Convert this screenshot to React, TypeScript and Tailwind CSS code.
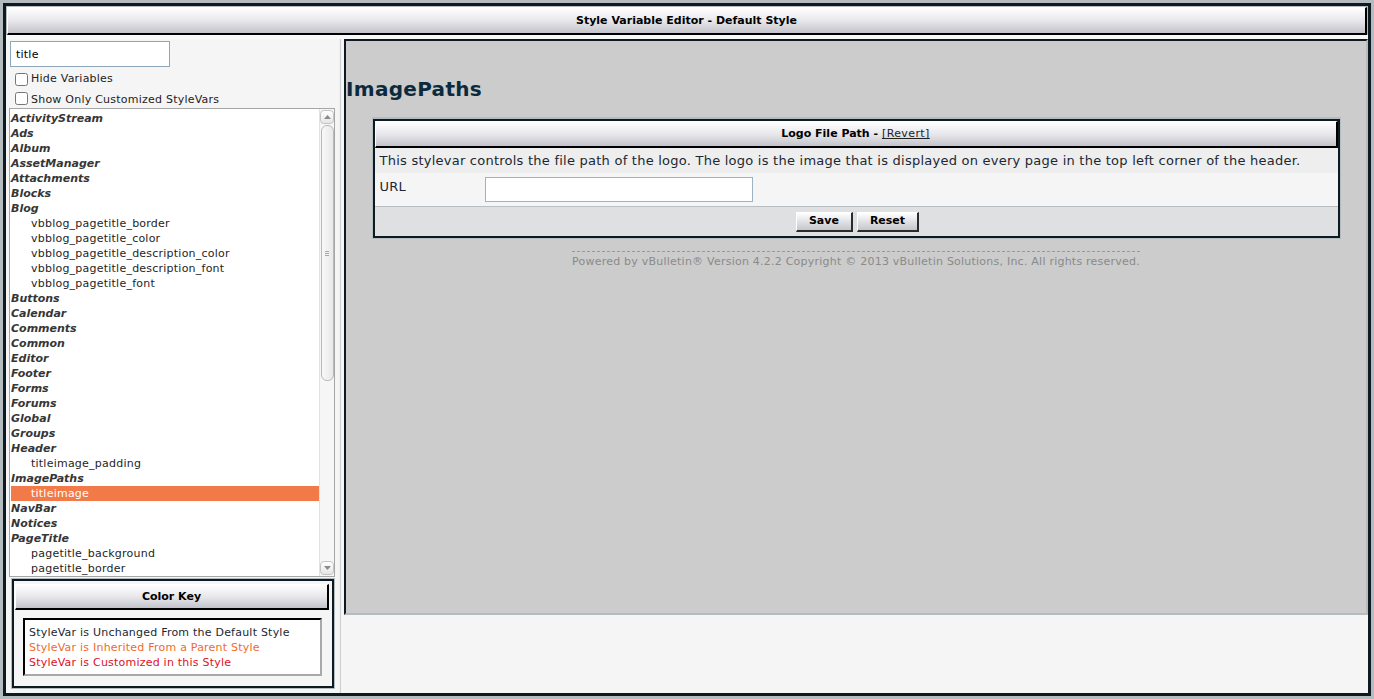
import React from 'react'

type Item = { name: string; group?: boolean; selected?: boolean }

const items: Item[] = [
  { name: 'ActivityStream', group: true },
  { name: 'Ads', group: true },
  { name: 'Album', group: true },
  { name: 'AssetManager', group: true },
  { name: 'Attachments', group: true },
  { name: 'Blocks', group: true },
  { name: 'Blog', group: true },
  { name: 'vbblog_pagetitle_border' },
  { name: 'vbblog_pagetitle_color' },
  { name: 'vbblog_pagetitle_description_color' },
  { name: 'vbblog_pagetitle_description_font' },
  { name: 'vbblog_pagetitle_font' },
  { name: 'Buttons', group: true },
  { name: 'Calendar', group: true },
  { name: 'Comments', group: true },
  { name: 'Common', group: true },
  { name: 'Editor', group: true },
  { name: 'Footer', group: true },
  { name: 'Forms', group: true },
  { name: 'Forums', group: true },
  { name: 'Global', group: true },
  { name: 'Groups', group: true },
  { name: 'Header', group: true },
  { name: 'titleimage_padding' },
  { name: 'ImagePaths', group: true },
  { name: 'titleimage', selected: true },
  { name: 'NavBar', group: true },
  { name: 'Notices', group: true },
  { name: 'PageTitle', group: true },
  { name: 'pagetitle_background' },
  { name: 'pagetitle_border' },
]

function Arrow({ down }: { down?: boolean }) {
  return (
    <div className="h-[14px] w-[14px] rounded-[4px] border border-[#c4c4c4] bg-linear-to-b from-white to-[#e6e6e6] flex items-center justify-center">
      <svg width="7" height="4" viewBox="0 0 7 4">
        <path d={down ? 'M0 0H7L3.5 4Z' : 'M0 4H7L3.5 0Z'} fill="#8a8a8a" />
      </svg>
    </div>
  )
}

function Scrollbar() {
  return (
    <div className="w-[15px] shrink-0 flex flex-col items-center bg-[#f6f6f6] border-l border-[#e2e2e2] py-px">
      <Arrow />
      <div className="mt-px h-[256px] w-[13px] rounded-[6px] border border-[#b9b9b9] bg-linear-to-r from-[#f8f8f8] to-[#e8e8e8] flex flex-col items-center justify-center gap-px">
        <div className="h-px w-[4px] bg-[#a8a8a8]" />
        <div className="h-px w-[4px] bg-[#a8a8a8]" />
        <div className="h-px w-[4px] bg-[#a8a8a8]" />
      </div>
      <div className="flex-1" />
      <Arrow down />
    </div>
  )
}

function BarHeader({ children }: { children: React.ReactNode }) {
  return (
    <div className="border-t border-l border-white border-r-2 border-b-2 border-r-black border-b-black bg-linear-to-b from-white via-[#e8e8ec] to-[#c3c4cb] flex items-center justify-center text-[11px] font-bold text-black">
      {children}
    </div>
  )
}

function Button({ label }: { label: string }) {
  return (
    <div className="h-[20px] px-[12px] border-t border-l border-white border-r-2 border-b-2 border-r-[#2b2b2b] border-b-[#2b2b2b] bg-linear-to-b from-white to-[#c5c6cc] flex items-center justify-center text-[11px] font-bold text-black">
      {label}
    </div>
  )
}

export default function App() {
  return (
    <div className="h-[699px] w-[1374px] overflow-hidden bg-[#b5bcc0] p-[3px] font-['DejaVu_Sans',Verdana,sans-serif]">
      <div className="h-full border-[3px] border-[#0d1a22] bg-[#f5f5f5] flex flex-col">
        <div className="bg-[#b5bcc0] pt-px px-px">
          <div className="h-[28px]">
            <BarHeader>
              <div className="h-[25px] pt-px flex items-center">Style Variable Editor - Default Style</div>
            </BarHeader>
          </div>
        </div>
        <div className="h-[4px] bg-[#f8f8f8]" />
        <div className="flex flex-1 min-h-0">
          {/* left column */}
          <div className="w-[333px] shrink-0 flex flex-col pt-[2px]">
            <input
              readOnly
              value="title"
              className="ml-[4px] h-[26px] w-[160px] border border-[#8ea7ba] bg-white px-[5px] text-[11px] tracking-[0.23px] text-black outline-none"
            />
            <label className="mt-[2px] ml-[9px] h-[20px] flex items-center gap-[3px] text-[11px] tracking-[0.23px] text-[#222]">
              <input type="checkbox" className="m-0 h-[13px] w-[13px]" />
              Hide Variables
            </label>
            <label className="ml-[9px] h-[19px] flex items-start pt-[3px] gap-[3px] text-[11px] tracking-[0.23px] text-[#222]">
              <input type="checkbox" className="m-0 h-[13px] w-[13px]" />
              Show Only Customized StyleVars
            </label>
            <div className="ml-[3px] h-[469px] w-[326px] border border-[#a6a6a6] bg-white flex overflow-hidden">
              <div className="flex-1 pt-[2px] pl-px overflow-hidden">
                {items.map((it) => (
                  <div
                    key={it.name}
                    className={
                      it.selected
                        ? 'h-[15px] leading-[15px] pl-[20px] text-[11px] tracking-[0.23px] bg-[#f27a48] text-white'
                        : it.group
                          ? 'h-[15px] leading-[15px] text-[11px] font-bold italic text-[#363636]'
                          : 'h-[15px] leading-[15px] pl-[20px] text-[11px] tracking-[0.23px] text-[#1e1e1e]'
                    }
                  >
                    {it.name}
                  </div>
                ))}
              </div>
              <Scrollbar />
            </div>
            <div className="mt-[2px] ml-[6px] w-[322px] border-2 border-[#0d1a22] outline outline-[#b5bcc0] bg-[#f5f5f5] pt-[3px] px-px pb-[10px]">
              <div className="mr-[2px] h-[26px]">
                <BarHeader>
                  <div className="h-[23px] pt-px flex items-center">Color Key</div>
                </BarHeader>
              </div>
              <div className="mt-[8px] ml-[8px] w-[299px] border-2 border-t-black border-l-black border-r-[#a9a9a9] border-b-[#a9a9a9] bg-white px-[4px] pt-[5px] pb-[4px] text-[11px] tracking-[0.22px] leading-[15px]">
                <div className="text-[#1b2833]">StyleVar is Unchanged From the Default Style</div>
                <div className="text-[#f26a2a]">StyleVar is Inherited From a Parent Style</div>
                <div className="text-[#e0101e]">StyleVar is Customized in this Style</div>
              </div>
            </div>
          </div>
          {/* separator */}
          <div className="w-[2px] shrink-0 bg-[#f0f0f0] border-r border-[#cfcfcf]" />
          {/* right column */}
          <div className="flex-1 pl-[3px]">
            <div className="h-[576px] border-2 border-t-[#0d1a22] border-l-[#0d1a22] border-r-[#b5bcc0] border-b-[#b5bcc0] bg-[#cccccc] flex flex-col">
              <h1 className="mt-[36px] h-[24px] leading-[24px] text-[20px] tracking-[0.3px] font-bold text-[#0b2a3e]">ImagePaths</h1>
              <div className="mt-[16px] mx-auto w-[969px] border border-t-2 border-[#b5bcc0]">
                <div className="border-2 border-[#0d1a22] bg-[#f5f5f5]">
                  <div className="h-[27px]">
                    <BarHeader>
                      <div className="h-[24px] pt-px flex items-center">
                        Logo File Path -&nbsp;<span className="font-normal underline tracking-[0.4px] text-[#222]">[Revert]</span>
                      </div>
                    </BarHeader>
                  </div>
                  <div className="h-[25px] flex items-center bg-[#eeeeee] pl-[5px] text-[13px] tracking-[0.24px] text-[#1b2833]">
                    This stylevar controls the file path of the logo. The logo is the image that is displayed on every page in the top left corner of the header.
                  </div>
                  <div className="h-[33px] flex items-start bg-[#f5f5f5] pl-[5px] text-[13px] tracking-[0.24px] text-[#1b2833]">
                    <div className="w-[105px] pt-[4px]">URL</div>
                    <input readOnly className="mt-[4px] h-[25px] w-[268px] border border-[#9db3c4] bg-white outline-none" />
                  </div>
                  <div className="h-[30px] border-t border-[#b8bec2] bg-[#dfe0e2] flex items-center justify-center gap-[4px] pl-[3px]">
                    <Button label="Save" />
                    <Button label="Reset" />
                  </div>
                </div>
              </div>
              <div className="mt-[12px] flex justify-center">
                <div className="border-t border-dashed border-[#999999] pt-[2px] text-[11px] tracking-[0.23px] text-[#8a8a8a]">
                  Powered by vBulletin® Version 4.2.2 Copyright © 2013 vBulletin Solutions, Inc. All rights reserved.
                </div>
              </div>
            </div>
          </div>
        </div>
      </div>
    </div>
  )
}
